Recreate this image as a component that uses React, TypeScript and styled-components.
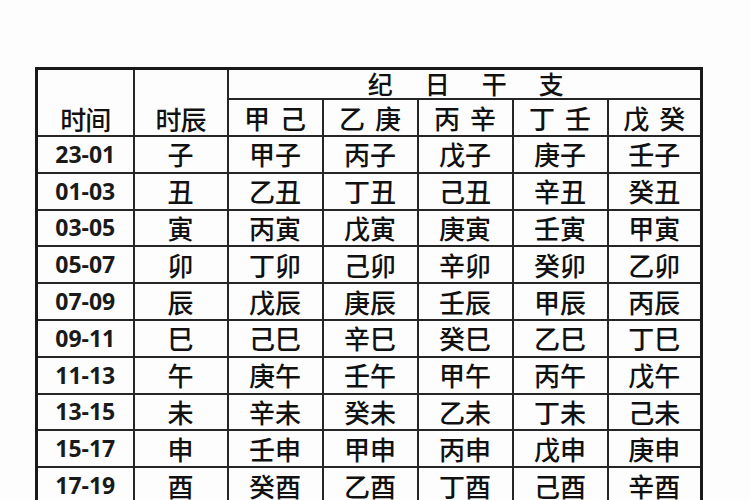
import React from "react";
import styled, { createGlobalStyle } from "styled-components";

const GlobalStyle = createGlobalStyle`
  html, body {
    margin: 0;
    padding: 0;
    background: #fdfdfd;
    overflow: hidden;
  }
`;

const Page = styled.div`
  width: 750px;
  height: 500px;
  padding: 67px 0 0 35px;
  box-sizing: border-box;
  overflow: hidden;
`;

const Table = styled.table`
  border-collapse: collapse;
  table-layout: fixed;
  width: 665px;
  border: 3px solid #1a1a1a;
  font-family: "Noto Sans CJK SC", "Noto Sans", sans-serif;
  color: #111;
`;

const Cell = styled.td<{ $h?: number; $align?: string }>`
  border: 2px solid #262626;
  padding: 0;
  text-align: center;
  vertical-align: ${(p) => p.$align || "middle"};
  height: ${(p) => p.$h ?? 34.8}px;
  font-size: 26px;
  font-weight: 500;
  line-height: 1;
  white-space: nowrap;
`;

const CornerLabel = styled.div`
  padding-bottom: 3px;
  letter-spacing: -1px;
`;

const Banner = styled.div`
  display: flex;
  justify-content: center;
  gap: 32px;
  font-size: 25px;
  padding-bottom: 2px;
  margin-left: 3px;
`;

const Pair = styled.span`
  word-spacing: 4px;
`;

const Time = styled(Cell)`
  font-family: "Open Sans", "Liberation Sans", sans-serif;
  font-weight: 700;
  font-size: 23px;
  color: #1a1a1a;
`;

const widths = [97, 94, 95, 95, 95, 95, 94];

const stemPairs = ["甲 己", "乙 庚", "丙 辛", "丁 壬", "戊 癸"];

const rows: { time: string; branch: string; cells: string[] }[] = [
  { time: "23-01", branch: "子", cells: ["甲子", "丙子", "戊子", "庚子", "壬子"] },
  { time: "01-03", branch: "丑", cells: ["乙丑", "丁丑", "己丑", "辛丑", "癸丑"] },
  { time: "03-05", branch: "寅", cells: ["丙寅", "戊寅", "庚寅", "壬寅", "甲寅"] },
  { time: "05-07", branch: "卯", cells: ["丁卯", "己卯", "辛卯", "癸卯", "乙卯"] },
  { time: "07-09", branch: "辰", cells: ["戊辰", "庚辰", "壬辰", "甲辰", "丙辰"] },
  { time: "09-11", branch: "巳", cells: ["己巳", "辛巳", "癸巳", "乙巳", "丁巳"] },
  { time: "11-13", branch: "午", cells: ["庚午", "壬午", "甲午", "丙午", "戊午"] },
  { time: "13-15", branch: "未", cells: ["辛未", "癸未", "乙未", "丁未", "己未"] },
  { time: "15-17", branch: "申", cells: ["壬申", "甲申", "丙申", "戊申", "庚申"] },
  { time: "17-19", branch: "酉", cells: ["癸酉", "乙酉", "丁酉", "己酉", "辛酉"] },
];

export default function App() {
  return (
    <>
      <GlobalStyle />
      <Page>
        <Table>
          <colgroup>
            {widths.map((w, i) => (
              <col key={i} style={{ width: w }} />
            ))}
          </colgroup>
          <tbody>
            <tr>
              <Cell rowSpan={2} $h={28} $align="bottom">
                <CornerLabel>时间</CornerLabel>
              </Cell>
              <Cell rowSpan={2} $h={28} $align="bottom">
                <CornerLabel>时辰</CornerLabel>
              </Cell>
              <Cell colSpan={5} $h={28} $align="bottom">
                <Banner>
                  {"纪日干支".split("").map((c) => (
                    <span key={c}>{c}</span>
                  ))}
                </Banner>
              </Cell>
            </tr>
            <tr>
              {stemPairs.map((p) => (
                <Cell key={p} $h={35}>
                  <Pair>{p}</Pair>
                </Cell>
              ))}
            </tr>
            {rows.map((r) => (
              <tr key={r.time}>
                <Time>{r.time}</Time>
                <Cell>{r.branch}</Cell>
                {r.cells.map((c, i) => (
                  <Cell key={i}>{c}</Cell>
                ))}
              </tr>
            ))}
          </tbody>
        </Table>
      </Page>
    </>
  );
}
